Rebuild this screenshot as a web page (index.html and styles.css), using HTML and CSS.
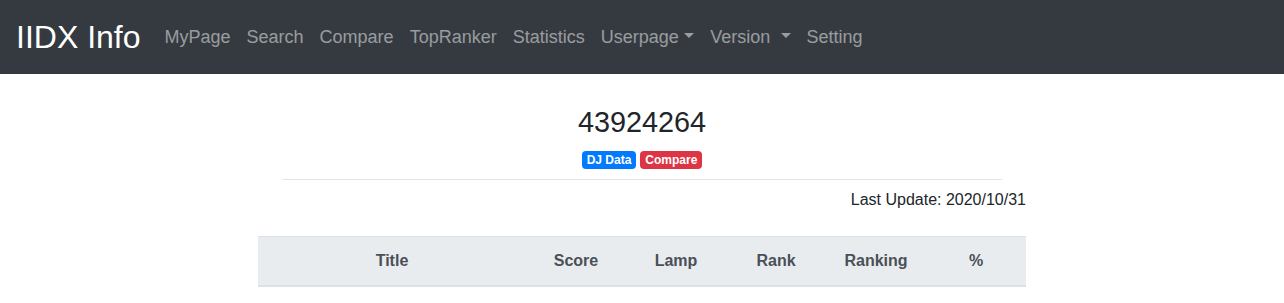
FILE: index.html
```html
<!DOCTYPE html>
<html>

<head>
    <title>IIDX Info</title>
    <meta charset="utf-8">
    <link rel="stylesheet" href="styles.css">
</head>

<body>
    <nav class="navbar">
        <a class="navbar-brand" href="#">IIDX Info</a>
        <ul class="navbar-nav">
            <li><a class="nav-link" href="#">MyPage</a></li>
            <li><a class="nav-link" href="#">Search</a></li>
            <li><a class="nav-link" href="#">Compare</a></li>
            <li><a class="nav-link" href="#">TopRanker</a></li>
            <li><a class="nav-link" href="#">Statistics</a></li>
            <li><a class="nav-link dropdown-toggle" href="#">Userpage</a></li>
            <li><a class="nav-link dropdown-toggle" href="#">Version </a></li>
            <li><a class="nav-link" href="#">Setting</a></li>
        </ul>
    </nav>

    <div class="container">
        <div class="profile">
            <h2 class="djname">43924264</h2>
            <div class="badges">
                <a class="badge badge-primary" href="#">DJ Data</a>
                <a class="badge badge-danger" href="#">Compare</a>
            </div>
            <hr>
        </div>

        <div class="last-update">Last Update: 2020/10/31</div>

        <table class="table">
            <thead>
                <tr>
                    <th class="col-title">Title</th>
                    <th class="col-num">Score</th>
                    <th class="col-num">Lamp</th>
                    <th class="col-num">Rank</th>
                    <th class="col-num">Ranking</th>
                    <th class="col-num">%</th>
                </tr>
            </thead>
        </table>
    </div>
</body>

</html>
```

FILE: styles.css
```css
html {
    font-size: 16px;
}

body {
    margin: 0;
    font-family: "Liberation Sans", Arial, sans-serif;
    font-size: 1rem;
    line-height: 1.5;
    color: #212529;
    background-color: #fff;
}

a {
    text-decoration: none;
}

.navbar {
    display: flex;
    align-items: center;
    padding: 0.5rem 1rem;
    background-color: #343a40;
}

.navbar-brand {
    padding: 0.3125rem 0;
    margin-right: 1rem;
    font-size: 2rem;
    line-height: 1.5;
    color: #fff;
    white-space: nowrap;
}

.navbar-nav {
    display: flex;
    list-style: none;
    margin: 0;
    padding: 0;
}

.nav-link {
    display: block;
    padding: 0.5rem;
    font-size: 1.125rem;
    color: rgba(255, 255, 255, 0.5);
    white-space: pre;
}

.nav-link:hover {
    color: rgba(255, 255, 255, 0.75);
}

.dropdown-toggle::after {
    display: inline-block;
    margin-left: 0.3em;
    vertical-align: 0.255em;
    content: "";
    border-top: 0.3em solid;
    border-right: 0.3em solid transparent;
    border-left: 0.3em solid transparent;
}

.container {
    width: 768px;
    margin: 0 auto;
    padding-top: 31px;
}

.profile {
    margin: 0 24px;
    text-align: center;
}

.djname {
    margin: 0 0 11px;
    font-size: 1.8rem;
    font-weight: 500;
    line-height: 1.2;
}

.badges {
    display: flex;
    justify-content: center;
    gap: 4px;
}

.badge {
    display: inline-block;
    padding: 3px 5px;
    font-size: 75%;
    font-weight: 700;
    line-height: 1;
    color: #fff;
    border-radius: 0.25rem;
}

.badge-primary {
    background-color: #007bff;
}

.badge-danger {
    background-color: #dc3545;
}

hr {
    margin: 10px 0 0;
    border: 0;
    border-top: 1px solid rgba(0, 0, 0, 0.1);
}

.last-update {
    margin-top: 8px;
    text-align: right;
}

.table {
    width: 100%;
    margin-top: 24px;
    border-collapse: collapse;
    color: #212529;
}

.table th {
    padding: 0.75rem;
    font-weight: 700;
    text-align: center;
    color: #495057;
    background-color: #e9ecef;
    border-top: 1px solid #dee2e6;
    border-bottom: 2px solid #dee2e6;
}

.col-num {
    width: 100px;
    box-sizing: border-box;
}
```
